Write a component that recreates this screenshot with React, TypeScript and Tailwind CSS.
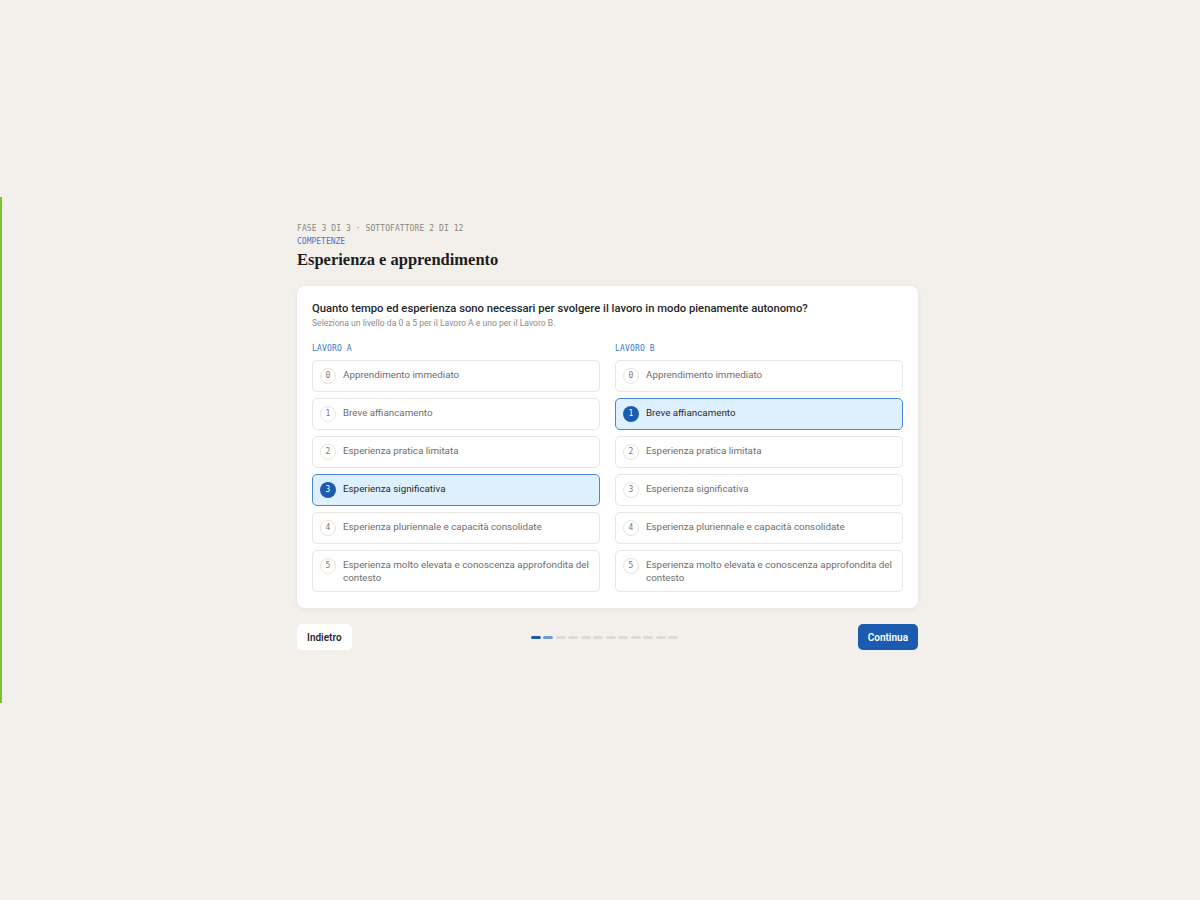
import React from "react";

const labels = [
  "Apprendimento immediato",
  "Breve affiancamento",
  "Esperienza pratica limitata",
  "Esperienza significativa",
  "Esperienza pluriennale e capacità consolidate",
  "Esperienza molto elevata e conoscenza approfondita del contesto",
];

const body = { fontFamily: 'Roboto, "Liberation Sans", sans-serif' };
const mono = { fontFamily: '"DejaVu Sans Mono", "Liberation Mono", monospace' };
const serif = { fontFamily: '"Liberation Serif", "DejaVu Serif", serif' };

function Column({ title, selected }: { title: string; selected: number }) {
  return (
    <div className="flex flex-col">
      <div className="text-[8px] leading-[12px] text-[#3d78c9] tracking-[0.02em]" style={mono}>
        {title}
      </div>
      <div className="mt-[5px] flex flex-col gap-[6px]">
        {labels.map((l, i) => {
          const sel = i === selected;
          return (
            <div
              key={i}
              className={
                sel
                  ? "flex items-start gap-[7px] rounded-[5px] border border-[#4a86d4] bg-[#def0fd] pl-[7px] pr-[3px] py-[7px]"
                  : "flex items-start gap-[7px] rounded-[5px] border border-[#e8e6e3] bg-white pl-[7px] pr-[3px] py-[7px]"
              }
            >
              <div
                className={
                  sel
                    ? "flex h-[16px] w-[16px] shrink-0 items-center justify-center rounded-full bg-[#1b5cb0] text-[8px] text-white"
                    : "flex h-[16px] w-[16px] shrink-0 items-center justify-center rounded-full border border-[#e6e4e1] text-[8px] text-[#777]"
                }
                style={mono}
              >
                {i}
              </div>
              <div
                className={
                  sel
                    ? "text-[9.8px] leading-[13px] text-[#2b2b2b]"
                    : "text-[9.8px] leading-[13px] text-[#6e6e6e]"
                }
                style={body}
              >
                {l}
              </div>
            </div>
          );
        })}
      </div>
    </div>
  );
}

export default function App() {
  return (
    <div className="flex min-h-screen items-center bg-[#f3f0eb]" style={body}>
      <div className="w-full border-l-2 border-[#7cc230] pl-[13px] pt-[26px] pb-[53px]">
        <div className="mx-auto w-[621px]">
          <div className="text-[8px] leading-[12px] text-[#8a8782] tracking-[0.01em]" style={mono}>
            FASE 3 DI 3 · SOTTOFATTORE 2 DI 12
          </div>
          <div className="mt-[1px] text-[8px] leading-[12px] text-[#3d78c9]" style={mono}>
            COMPETENZE
          </div>
          <h1 className="mt-[1px] text-[16.5px] leading-[22px] font-bold text-[#1e1e1e]" style={serif}>
            Esperienza e apprendimento
          </h1>
          <div className="mt-[15px] rounded-[8px] bg-white px-[15px] pt-[16px] pb-[16px] shadow-[0_1px_6px_rgba(0,0,0,0.06)]">
            <div className="text-[11.25px] leading-[14px] font-medium text-[#23262b]">
              Quanto tempo ed esperienza sono necessari per svolgere il lavoro in modo pienamente autonomo?
            </div>
            <div className="mt-[1px] text-[8.6px] leading-[12px] text-[#8d8b88]">
              Seleziona un livello da 0 a 5 per il Lavoro A e uno per il Lavoro B.
            </div>
            <div className="mt-[14px] grid grid-cols-2 gap-[15px]">
              <Column title="LAVORO A" selected={3} />
              <Column title="LAVORO B" selected={1} />
            </div>
          </div>
          <div className="mt-[16px] flex items-center justify-between">
            <button className="h-[26px] rounded-[5px] bg-white px-[10px] text-[10px] font-semibold text-[#2a2a2a]">
              Indietro
            </button>
            <div className="flex gap-[2.5px]">
              {Array.from({ length: 12 }).map((_, i) => (
                <div
                  key={i}
                  className={
                    i === 0
                      ? "h-[3px] w-[10px] rounded-full bg-[#1b5cb0]"
                      : i === 1
                      ? "h-[3px] w-[10px] rounded-full bg-[#6c9bd3]"
                      : "h-[3px] w-[10px] rounded-full bg-[#dddad5]"
                  }
                />
              ))}
            </div>
            <button className="h-[26px] rounded-[5px] bg-[#1b5cb0] px-[10px] text-[10px] font-semibold text-white">
              Continua
            </button>
          </div>
        </div>
      </div>
    </div>
  );
}
